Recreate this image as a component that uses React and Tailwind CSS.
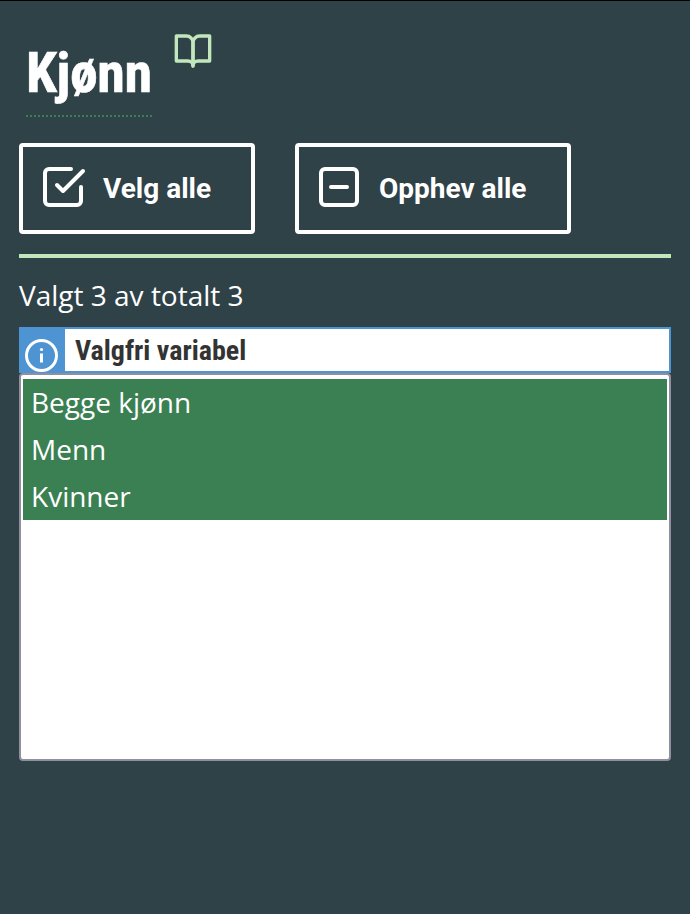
import React from "react";

const options = ["Begge kjønn", "Menn", "Kvinner"];

function BookIcon() {
  return (
    <svg className="h-10 w-10" viewBox="0 0 24 24" fill="none" stroke="currentColor" strokeWidth="2" strokeLinecap="round" strokeLinejoin="round">
      <path d="M2 3h6a4 4 0 0 1 4 4v14a3 3 0 0 0-3-3H2z" />
      <path d="M22 3h-6a4 4 0 0 0-4 4v14a3 3 0 0 1 3-3h7z" />
    </svg>
  );
}

function ActionButton({ label, width, children }) {
  return (
    <button className={`flex h-[91px] items-start rounded-[4px] border-4 border-white pt-4 pl-4 font-[Roboto,sans-serif] text-[28px] font-bold text-white ${width}`}>
      <svg className="h-12 w-12 shrink-0" viewBox="0 0 24 24" fill="none" stroke="currentColor" strokeWidth="2" strokeLinecap="round" strokeLinejoin="round">
        {children}
      </svg>
      <span className="ml-4 pt-[6px] leading-[40px] whitespace-nowrap">{label}</span>
    </button>
  );
}

export default function App() {
  return (
    <main className="h-[914px] w-[690px] overflow-hidden border-t border-black bg-[#2f4247] px-[19px] font-['Open_Sans',sans-serif] text-[28px] text-white">
      <header className="flex h-[142px] items-start pl-[7px]">
        <h1 className="mt-[37px] h-[79px] w-[126px] border-b-2 border-dotted border-[#3a8052] font-[Roboto,sans-serif] text-[56px] leading-[70px] font-bold tracking-[-0.4px] [-webkit-text-stroke:0.6px_white] [font-stretch:75%]">
          Kjønn
        </h1>
        <span className="mt-[30px] ml-[21px] text-[#c3e7bc]">
          <BookIcon />
        </span>
      </header>
      <div className="flex gap-10">
        <ActionButton label="Velg alle" width="w-[236px]">
          <polyline points="9 11 12 14 22 4" />
          <path d="M21 12v7a2 2 0 0 1-2 2H5a2 2 0 0 1-2-2V5a2 2 0 0 1 2-2h11" />
        </ActionButton>
        <ActionButton label="Opphev alle" width="w-[276px]">
          <rect x="3" y="3" width="18" height="18" rx="2" />
          <line x1="8" y1="12" x2="16" y2="12" />
        </ActionButton>
      </div>
      <div className="mt-5 h-1 bg-[#c3e7bc]" />
      <p className="mt-[17px] h-[52px] leading-[40px]">Valgt 3 av totalt 3</p>
      <div className="flex h-[46px] border-2 border-[#4f94d2] bg-white">
        <div className="flex w-11 shrink-0 items-start bg-[#4f94d2] pt-[10px] pl-1">
          <svg className="h-[33px] w-[33px]" viewBox="0 0 33 33" fill="none" stroke="white">
            <circle cx="16.5" cy="16.5" r="15" strokeWidth="3" />
            <path d="M16.5 14.5v9" strokeWidth="3" />
            <circle cx="16.5" cy="10.5" r="1.6" fill="white" stroke="none" />
          </svg>
        </div>
        <span className="ml-[10px] font-[Roboto,sans-serif] leading-[43px] font-bold text-[#333] [font-stretch:75%]">
          Valgfri variabel
        </span>
      </div>
      <ul className="h-[388px] rounded-[4px] border-2 border-[#8f8f9d] bg-white px-[2px] pt-1">
        {options.map((o) => (
          <li key={o} className="h-[47px] bg-[#3a8052] pl-2 leading-[47px]">{o}</li>
        ))}
      </ul>
    </main>
  );
}
